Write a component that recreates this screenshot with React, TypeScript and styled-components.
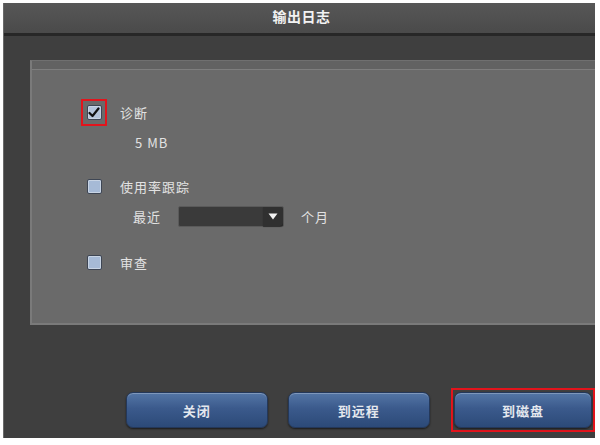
import { FC } from "react"
import styled, { createGlobalStyle } from "styled-components"

const GlobalStyle = createGlobalStyle`
	html, body {
		margin: 0;
		padding: 0;
		background: #ffffff;
		font-family: "Noto Sans CJK SC", "Liberation Sans", sans-serif;
	}
`

const App: FC = () => {
	return (
		<>
			<GlobalStyle />
			<Window>
				<TitleBar>输出日志</TitleBar>

				<Panel>
					<PanelInner>
						<OptionRow $top={29}>
							<CheckSlot $highlight>
								<CheckBox $checked>
									<svg width="12" height="11" viewBox="0 0 12 11">
										<path d="M1.5 6 L4.5 9 L10.5 1.5" fill="none" stroke="#111" strokeWidth="2.2" strokeLinecap="round" strokeLinejoin="round" />
									</svg>
								</CheckBox>
							</CheckSlot>
							<Label>诊断</Label>
						</OptionRow>
						<SubRow $top={7} $indent={105}>
							<Label>5 MB</Label>
						</SubRow>

						<OptionRow $top={20}>
							<CheckSlot>
								<CheckBox />
							</CheckSlot>
							<Label>使用率跟踪</Label>
						</OptionRow>
						<SubRow $top={7} $indent={103}>
							<Label>最近</Label>
							<Select>
								<SelectArrow>
									<svg width="10" height="7" viewBox="0 0 10 7">
										<path d="M0.5 0.5 L9.5 0.5 L5 6.5 Z" fill="#f2f2f2" />
									</svg>
								</SelectArrow>
							</Select>
							<Label>个月</Label>
						</SubRow>

						<OptionRow $top={22}>
							<CheckSlot>
								<CheckBox />
							</CheckSlot>
							<Label>审查</Label>
						</OptionRow>
					</PanelInner>
				</Panel>

				<Footer>
					<Button $width={142}>关闭</Button>
					<Button $width={143}>到远程</Button>
					<Highlight>
						<Button $width={138}>到磁盘</Button>
					</Highlight>
				</Footer>
			</Window>
		</>
	)
}

const Window = styled.div`
	/* Layout */
	display: flex;
	flex-direction: column;
	margin: 3px 0 0 3px;
	width: 592px;
	height: 435px;

	/* Color */
	background: #3f3f3f;
	border-left: 1px solid #6a6a6a;
	box-sizing: border-box;
`

const TitleBar = styled.div`
	/* Layout */
	height: 33px;
	box-sizing: border-box;
	display: flex;
	align-items: center;
	justify-content: center;
	padding: 0 0 4px 4px;

	/* Color */
	background: linear-gradient(#575757, #4a4a4a);
	border-bottom: 3px solid #272727;
	color: #f2f2f2;

	/* Text */
	font-size: 14px;
	font-weight: bold;
	letter-spacing: 0.5px;
`

const Panel = styled.div`
	/* Layout */
	margin: 24px 0 0 26px;
	height: 265px;
	padding-top: 8px;
	box-sizing: border-box;
	display: flex;
	flex-direction: column;

	/* Color */
	background: #626262;
	border-top: 1px solid #707070;
	border-left: 2px solid #7a7a7a;
	border-bottom: 2px solid #7a7a7a;
`

const PanelInner = styled.div`
	/* Layout */
	flex: 1;
	display: flex;
	flex-direction: column;

	/* Color */
	background: #6a6a6a;
	border-top: 1px solid #7e7e7e;
`

const OptionRow = styled.div<{ $top: number }>`
	/* Layout */
	display: flex;
	align-items: center;
	height: 26px;
	margin-top: ${p => p.$top}px;
	padding-left: 49px;
	gap: 13px;
`

const SubRow = styled.div<{ $top: number; $indent: number }>`
	/* Layout */
	display: flex;
	align-items: center;
	height: 21px;
	margin-top: ${p => p.$top}px;
	padding-left: ${p => p.$indent - 2}px;
	gap: 17px;
`

const CheckSlot = styled.div<{ $highlight?: boolean }>`
	/* Layout */
	width: 26px;
	height: 27px;
	display: flex;
	align-items: center;
	justify-content: center;
	box-sizing: border-box;

	/* Border */
	border: 2px solid ${p => (p.$highlight ? "#e3141c" : "transparent")};
`

const CheckBox = styled.div<{ $checked?: boolean }>`
	/* Layout */
	width: 15px;
	height: 15px;
	display: flex;
	align-items: center;
	justify-content: center;
	box-sizing: border-box;

	/* Color */
	background: ${p => (p.$checked ? "#b4c4da" : "#a6bad6")};
	border: 1px solid #3e4654;
	border-radius: 2px;
	box-shadow: inset 0 0 0 1px #c8d4e4;
`

const Label = styled.span`
	/* Color */
	color: #e2e2e2;

	/* Text */
	font-size: 13px;
	letter-spacing: 1px;
	white-space: nowrap;
`

const Select = styled.div`
	/* Layout */
	width: 106px;
	height: 21px;
	display: flex;
	justify-content: flex-end;
	box-sizing: border-box;

	/* Color */
	background: #3a3a3a;
	border: 1px solid #5a5a5a;
	border-radius: 2px;
`

const SelectArrow = styled.div`
	/* Layout */
	width: 20px;
	display: flex;
	align-items: center;
	justify-content: center;

	/* Color */
	background: #303030;
	border-radius: 0 3px 3px 0;
	box-shadow: 0 1px 1px rgba(0, 0, 0, 0.5);
`

const Footer = styled.div`
	/* Layout */
	margin-top: auto;
	display: flex;
	align-items: center;
	gap: 20px;
	padding: 0 0 6px 122px;
`

const Highlight = styled.div`
	/* Layout */
	padding: 2px 1px;
	margin-left: 1px;

	/* Border */
	border: 2px solid #e3141c;
`

const Button = styled.button<{ $width: number }>`
	/* Layout */
	width: ${p => p.$width}px;
	height: 36px;
	padding: 0;

	/* Color */
	background: linear-gradient(#5476a6, #3b5a8c 45%, #2c4a78);
	color: #e4e8ee;

	/* Text */
	font-family: "Noto Sans CJK SC", "Liberation Sans", sans-serif;
	font-size: 13px;
	font-weight: bold;
	letter-spacing: 1px;

	/* Border */
	border: 1px solid #24385a;
	border-radius: 7px;

	/* Shadow */
	box-shadow: inset 0 1px 0 rgba(255, 255, 255, 0.25), 0 1px 2px rgba(0, 0, 0, 0.6);
`

export default App
